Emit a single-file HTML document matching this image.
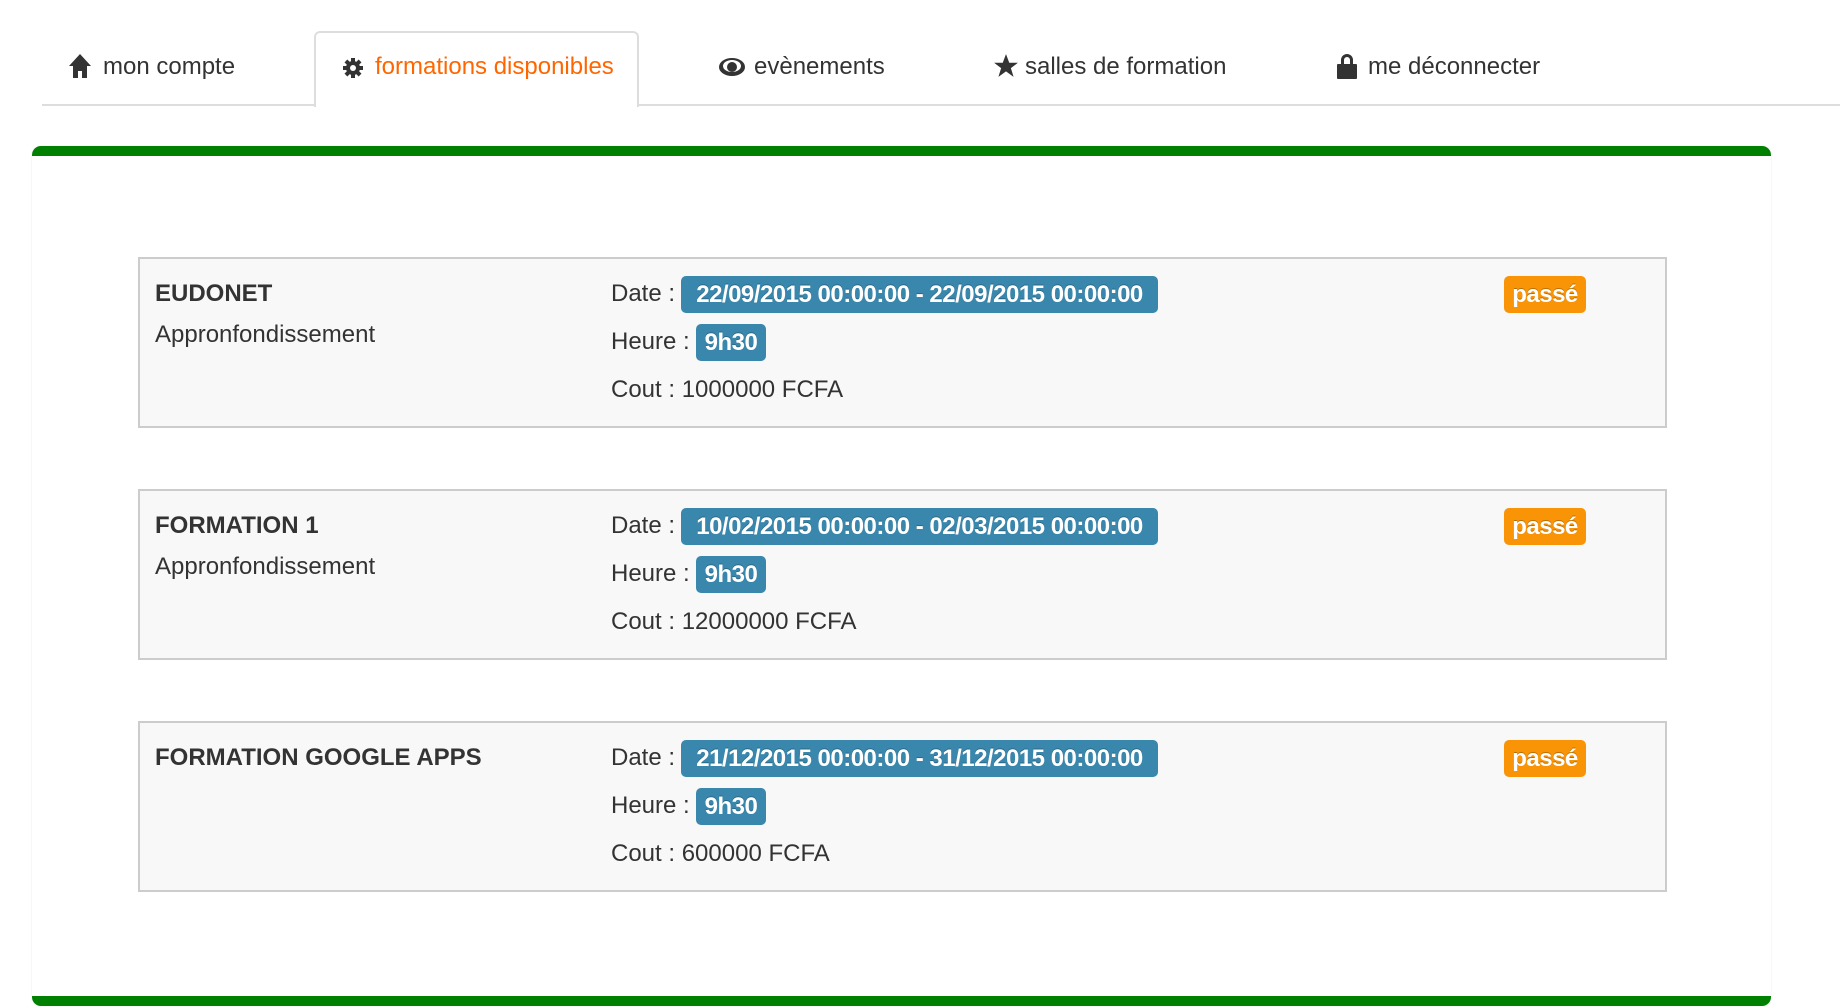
<!DOCTYPE html>
<html><head><meta charset="utf-8"><style>
*{margin:0;padding:0;box-sizing:border-box}
body{width:1840px;height:1008px;background:#fff;font-family:"Liberation Sans",Arial,sans-serif;color:#333;position:relative;overflow:hidden}
.abs{position:absolute}
.tabline{left:42px;top:104px;width:1798px;height:2px;background:#ddd}
.active{left:314px;top:31px;width:325px;height:76px;border:2px solid #ddd;border-bottom:none;border-radius:6px 6px 0 0;background:#fff}
.tab{position:absolute;top:52px;font-size:24px;line-height:30px;color:#333;white-space:nowrap}
.panel{left:32px;top:146px;width:1739px;height:860px;border-radius:9px;border-top:10px solid #008000;border-bottom:10px solid #008000;box-shadow:0 0 2px rgba(0,0,0,.08)}
.card{position:absolute;left:138px;width:1529px;height:171px;background:#f8f8f8;border:2px solid #ccc}
.t{position:absolute;font-size:24px;line-height:28px;white-space:nowrap}
.b{font-weight:bold}
.badge{position:absolute;height:37px;border-radius:5px;background:#3a87ad;color:#fff;font-weight:bold;font-size:24px;line-height:37px;text-align:center;white-space:nowrap;text-shadow:0 -1px 0 rgba(0,0,0,.25);letter-spacing:-0.5px}
.or{background:#f89406}
</style></head><body>
<div class="abs tabline"></div>
<div class="abs active"></div>
<div class="tab" style="left:68px"><svg width="24" height="26" viewBox="0 0 24 26" style="vertical-align:-5px"><path d="M12 1 L1 13 H5 V25 H10 V18 H14 V25 H19 V13 H23 Z" fill="#333"/></svg></div>
<div class="tab" style="left:103px">mon compte</div>
<div class="tab" style="left:342px"><svg width="22" height="24" viewBox="0 0 22 24" style="vertical-align:-5px"><g fill="#333"><circle cx="11" cy="13" r="7"/><rect x="9" y="3" width="4" height="20"/><rect x="1" y="11" width="20" height="4"/><rect x="9" y="3" width="4" height="20" transform="rotate(45 11 13)"/><rect x="9" y="3" width="4" height="20" transform="rotate(-45 11 13)"/></g><circle cx="11" cy="13" r="3" fill="#fff"/></svg></div>
<div class="tab" style="left:375px;color:#f60">formations disponibles</div>
<div class="tab" style="left:718px"><svg width="28" height="22" viewBox="0 0 28 22" style="vertical-align:-4px"><ellipse cx="14" cy="11" rx="13" ry="9" fill="#333"/><ellipse cx="14" cy="10" rx="9" ry="6" fill="#fff"/><circle cx="14" cy="11" r="5" fill="#333"/></svg></div>
<div class="tab" style="left:754px">evènements</div>
<div class="tab" style="left:993px"><svg width="26" height="26" viewBox="0 0 24 24" style="vertical-align:-5px"><path d="M12 1 L15 9 L23 9 L16.5 14 L19 22 L12 17 L5 22 L7.5 14 L1 9 L9 9 Z" fill="#333"/></svg></div>
<div class="tab" style="left:1025px">salles de formation</div>
<div class="tab" style="left:1336px"><svg width="22" height="26" viewBox="0 0 22 26" style="vertical-align:-5px"><path d="M5 11 V7 A6 6 0 0 1 17 7 V11 H14 V7 A3 3 0 0 0 8 7 V11 Z" fill="#333"/><rect x="1" y="11" width="20" height="15" rx="1" fill="#333"/></svg></div>
<div class="tab" style="left:1368px">me déconnecter</div>

<div class="abs panel"></div>

<div class="card" style="top:257px"></div>
<div class="card" style="top:489px"></div>
<div class="card" style="top:721px"></div>

<div class="t b" style="left:155px;top:280px">EUDONET</div>
<div class="t" style="left:155px;top:321px">Appronfondissement</div>
<div class="t" style="left:611px;top:280px">Date :</div>
<div class="badge" style="left:681px;top:276px;width:477px">22/09/2015 00:00:00 - 22/09/2015 00:00:00</div>
<div class="t" style="left:611px;top:328px">Heure :</div>
<div class="badge" style="left:696px;top:324px;width:70px">9h30</div>
<div class="t" style="left:611px;top:376px">Cout : 1000000 FCFA</div>
<div class="badge or" style="left:1504px;top:276px;width:82px">passé</div>

<div class="t b" style="left:155px;top:512px">FORMATION 1</div>
<div class="t" style="left:155px;top:553px">Appronfondissement</div>
<div class="t" style="left:611px;top:512px">Date :</div>
<div class="badge" style="left:681px;top:508px;width:477px">10/02/2015 00:00:00 - 02/03/2015 00:00:00</div>
<div class="t" style="left:611px;top:560px">Heure :</div>
<div class="badge" style="left:696px;top:556px;width:70px">9h30</div>
<div class="t" style="left:611px;top:608px">Cout : 12000000 FCFA</div>
<div class="badge or" style="left:1504px;top:508px;width:82px">passé</div>

<div class="t b" style="left:155px;top:744px">FORMATION GOOGLE APPS</div>
<div class="t" style="left:611px;top:744px">Date :</div>
<div class="badge" style="left:681px;top:740px;width:477px">21/12/2015 00:00:00 - 31/12/2015 00:00:00</div>
<div class="t" style="left:611px;top:792px">Heure :</div>
<div class="badge" style="left:696px;top:788px;width:70px">9h30</div>
<div class="t" style="left:611px;top:840px">Cout : 600000 FCFA</div>
<div class="badge or" style="left:1504px;top:740px;width:82px">passé</div>
</body></html>
